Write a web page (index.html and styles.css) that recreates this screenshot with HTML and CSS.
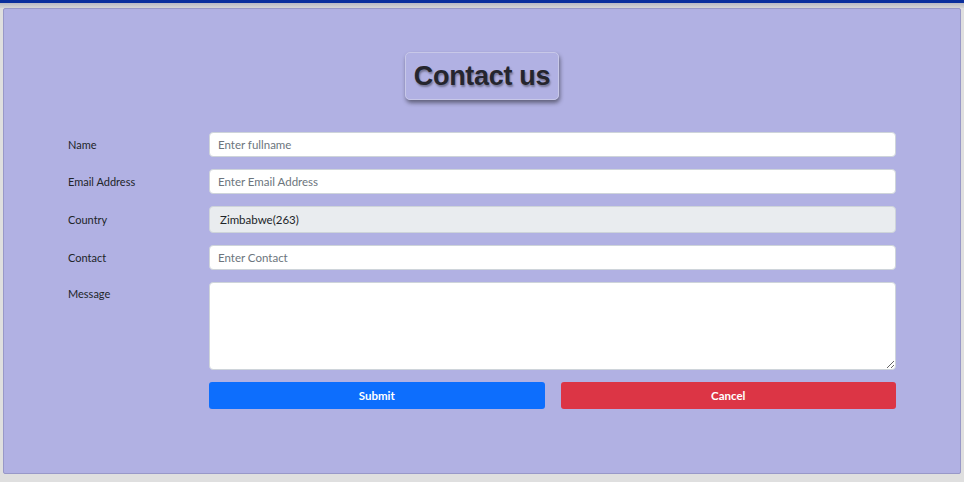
FILE: index.html
```html
<!DOCTYPE html>
<html lang="en">
<head>
  <meta charset="UTF-8">
  <title>Contact us</title>
  <link rel="stylesheet" href="styles.css">
</head>
<body>

  <div class="topbar"></div>

  <div class="panel">
    <div class="title-wrap">
      <h2 class="title">Contact us</h2>
    </div>

    <form id="contactForm" class="contact-form">
      <label for="name" class="lbl">Name</label>
      <input type="text" id="name" name="name" placeholder="Enter fullname">

      <label for="email" class="lbl">Email Address</label>
      <input type="email" id="email" name="email" placeholder="Enter Email Address">

      <label for="country" class="lbl">Country</label>
      <div id="country" class="readonly">Zimbabwe(263)</div>

      <label for="contact" class="lbl">Contact</label>
      <input type="tel" id="contact" name="contact" placeholder="Enter Contact">

      <label for="message" class="lbl lbl-top">Message</label>
      <textarea id="message" name="message"></textarea>

      <span></span>
      <div class="actions">
        <button type="submit" class="btn btn-submit">Submit</button>
        <button type="reset" class="btn btn-cancel">Cancel</button>
      </div>
    </form>
  </div>

</body>
</html>
```

FILE: styles.css
```css
body {
  margin: 0;
  font-family: Lato, 'Open Sans', sans-serif;
  background-color: #dfdfdf;
  height: 482px;
  overflow: hidden;
}

.topbar {
  height: 8px;
  background: linear-gradient(to bottom, #0b2f9c 0, #0b2f9c 3px, #b9b9c4 3px, #d6d6d6 8px);
}

.panel {
  margin: 0 3px;
  height: 464px;
  background-color: #b1b1e3;
  border: 1px solid #9898c8;
  border-radius: 2px;
}

.title-wrap {
  text-align: center;
  padding-top: 43px;
}

.title {
  display: inline-block;
  margin: 0;
  padding: 0 8px;
  height: 46px;
  line-height: 46px;
  font-family: 'Liberation Sans', Arial, sans-serif;
  font-size: 27px;
  font-weight: bold;
  letter-spacing: -0.3px;
  color: #25252d;
  text-shadow: 1px 2px 2px rgba(0, 0, 0, 0.35);
  border: 1px solid #c8c8e8;
  border-radius: 5px;
  box-shadow: 1px 3px 4px rgba(0, 0, 0, 0.45);
}

.contact-form {
  display: grid;
  grid-template-columns: 141px 1fr;
  row-gap: 12px;
  margin: 32px 64px 0 64px;
  font-size: 11px;
}

.lbl {
  align-self: center;
  color: #212529;
}

.lbl-top {
  align-self: start;
  margin-top: 5px;
}

input,
textarea,
.readonly {
  box-sizing: border-box;
  width: 100%;
  margin: 0;
  border: 1px solid #ced4da;
  border-radius: 4px;
  background-color: white;
  font-family: Lato, 'Open Sans', sans-serif;
  font-size: 11.5px;
  color: #212529;
}

input {
  height: 25px;
  padding: 0 8px;
}

input::placeholder {
  color: #6c757d;
}

.readonly {
  height: 27px;
  line-height: 25px;
  padding: 0 10px;
  background-color: #e9ecef;
  font-size: 11.5px;
}

textarea {
  height: 88px;
  resize: vertical;
  padding: 6px 8px;
}

.actions {
  display: flex;
  gap: 16px;
}

.btn {
  flex: 1;
  height: 27px;
  border: none;
  border-radius: 3px;
  color: white;
  font-family: Lato, 'Open Sans', sans-serif;
  font-size: 11.5px;
  font-weight: bold;
  cursor: pointer;
}

.btn-submit {
  background-color: #0d6efd;
}

.btn-cancel {
  background-color: #dc3545;
}
```
